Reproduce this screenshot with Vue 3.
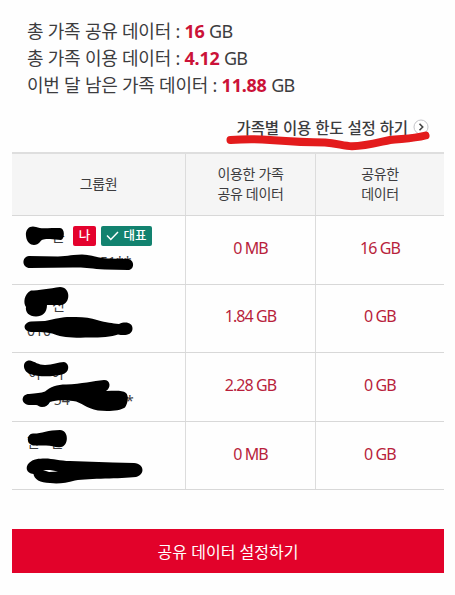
<script setup>
import { ref } from 'vue';

// 가족 데이터 요약
const summary = ref([
  { label: '총 가족 공유 데이터', value: '16' },
  { label: '총 가족 이용 데이터', value: '4.12' },
  { label: '이번 달 남은 가족 데이터', value: '11.88' },
]);

// 그룹원 목록 (이름과 번호는 펜으로 가림)
const members = ref([
  {
    id: 1,
    me: true,
    used: '0 MB',
    shared: '16 GB',
    viewBox: '12 216 173 68',
    texts: [
      { x: 52, y: 241, text: '은' },
      { x: 100, y: 267, text: '51**' },
    ],
    marks: [
      'M26 236C25 228 31 225 36 227C41 229 46 228 52 228L60 228C65 228 65 239 61 240L50 239C44 239 42 239 40 242C36 247 27 246 26 236Z',
      'M29 256L58 256.5C68 256 74 254.5 82 254.5C92 255 98 258 108 258.5L127 259C135 259 135 270 128 270L105 269.5C90 268.5 85 267 73 267.5L30 268C22 268 21 257 29 256Z',
    ],
  },
  {
    id: 2,
    used: '1.84 GB',
    shared: '0 GB',
    viewBox: '12 285 173 68',
    texts: [
      { x: 52, y: 310, text: '진' },
      { x: 27, y: 336, text: '010' },
    ],
    marks: [
      'M31 290.5C38 290.5 50 288.5 60 287C71 287 71 304 61 305L47 305C47 313 42 316.5 36 316.5C29 316.5 25 312 26 307C23 303 24 294 31 290.5Z',
      'M31 321.5L45 321C55 319 62 317 70 317C82 316.5 90 317.5 97 320C107 323 112 323 119 324C126 321 133 323 132.5 329C132 335 125 336 118 334.5C112 337 100 337.5 90 337.5C75 338 62 337.5 55 334.5C48 331.5 38 332.5 31 332C23 331 22 323 31 321.5Z',
    ],
  },
  {
    id: 3,
    used: '2.28 GB',
    shared: '0 GB',
    viewBox: '12 353 173 68',
    texts: [
      { x: 28, y: 378, text: '이' },
      { x: 51, y: 378, text: '이' },
      { x: 42, y: 405, text: '0 54' },
      { x: 126, y: 406, text: '*' },
    ],
    marks: [
      'M30 360.5C35 361.5 38 365 45 365C53 365 58 362 64 362C70 363 70 373 62 374.5C52 377 38 377 30 374C22 371 22 360 30 360.5Z',
      'M29 394C36 393 41 393 45 391.5C50 387 57 384.5 66 384.5C82 384 93 381 104 380C111 380 111 388 106 391C115 391 122 390 126 393C129 396 128 403 125 407.5C120 411 108 411.5 98 410.5C86 408.5 82 402 73 401C64 400 56 400 50 402C48 405 46 407 42 407C39 407 38 405 36 405L29 405C20 404 21 394 29 394Z',
    ],
  },
  {
    id: 4,
    used: '0 MB',
    shared: '0 GB',
    viewBox: '12 422 173 68',
    texts: [
      { x: 27, y: 447, text: '한' },
      { x: 51, y: 447, text: '은' },
    ],
    marks: [
      'M33 433.5C40 434 48 430 60 430C69 430 69 446 61 447C56 448 52 445.5 46 445.5L33 445.5C26 444 26 434 33 433.5Z',
      'M45 458.5C53 458.5 60 461 70 461L113 462.5L134 463C145 464 145 475 136 477C120 479 90 478 75 480.5C66 483 58 484 50 483C40 483 34 479 33.5 474C26 473 25 467 29 463C33 459 39 458.5 45 458.5ZM43 470L49 472L58 471.5L50 470Z',
    ],
  },
]);
</script>

<template>
  <main class="page">
    <ul class="summary">
      <li v-for="item in summary" :key="item.label">
        {{ item.label }} : <strong>{{ item.value }}</strong> <span class="unit">GB</span>
      </li>
    </ul>

    <div class="limit">
      <a class="limit-link">
        <span>가족별 이용 한도 설정 하기</span>
        <svg class="arrow" viewBox="0 0 16 16">
          <circle cx="8" cy="8" r="7" fill="#fff" stroke="#c4c4c8" />
          <path d="M6.5 4.8 9.7 8l-3.2 3.2" fill="none" stroke="#444" stroke-width="1.6" />
        </svg>
      </a>
      <svg class="underline" viewBox="220 125 220 30">
        <path d="M230.500 140C245 139 258 139 270 140C290 141.500 305 142.500 325 142.500C337 143.500 344 146 352 146.300C366 146 378 142.500 390 140C402 138.500 412 139 425.500 135.500" />
      </svg>
    </div>

    <div class="table">
      <div class="row head">
        <div class="cell"><span>그룹원</span></div>
        <div class="cell"><span>이용한 가족<br />공유 데이터</span></div>
        <div class="cell"><span>공유한<br />데이터</span></div>
      </div>
      <div v-for="m in members" :key="m.id" class="row">
        <div class="cell member">
          <div v-if="m.me" class="badges">
            <span class="badge me">나</span>
            <span class="badge rep">
              <svg class="check" viewBox="0 0 13 10"><path d="M1 4.500 4.800 8.500 12 1" /></svg>대표
            </span>
          </div>
          <svg class="marks" :viewBox="m.viewBox">
            <text v-for="t in m.texts" :key="t.x" :x="t.x" :y="t.y">{{ t.text }}</text>
            <path v-for="d in m.marks" :key="d" :d="d" fill-rule="evenodd" />
          </svg>
        </div>
        <div class="cell value"><span>{{ m.used }}</span></div>
        <div class="cell value"><span>{{ m.shared }}</span></div>
      </div>
    </div>

    <button class="submit">공유 데이터 설정하기</button>
  </main>
</template>

<style>
body {
  background: #fefefe;
}
</style>

<style scoped>
.page {
  box-sizing: border-box;
  width: 455px;
  height: 595px;
  padding: 18px 11px 0 12px;
  overflow: hidden;
  font-family: "Noto Sans", "Noto Sans CJK KR", sans-serif;
  color: #3c3c3e;
}
.summary {
  list-style: none;
  margin: 0;
  padding: 0 0 0 15px;
  font-size: 18px;
  line-height: 27px;
  letter-spacing: -0.23px;
  white-space: nowrap;
}
.summary strong {
  color: #cb1238;
}
.unit {
  letter-spacing: -0.8px;
}
.limit {
  position: relative;
  display: flex;
  justify-content: flex-end;
  height: 53px;
}
.limit-link {
  display: flex;
  align-items: center;
  gap: 5px;
  height: 24px;
  margin-top: 16px;
  margin-right: 15px;
  font-size: 15.5px;
  font-weight: 500;
  letter-spacing: -0.1px;
  white-space: nowrap;
}
.arrow {
  width: 16px;
  height: 16px;
}
.underline {
  position: absolute;
  left: 208px;
  top: 26px;
  width: 220px;
  height: 30px;
}
.underline path {
  fill: none;
  stroke: #e31b1c;
  stroke-width: 8;
  stroke-linecap: round;
}
.table {
  border-top: 2px solid #dedede;
}
.row {
  display: grid;
  grid-template-columns: 174px 130px 128px;
  height: 68.6px;
  box-sizing: border-box;
  border-bottom: 1px solid #d8d8d8;
}
.head {
  height: 62px;
  background: #f5f5f5;
  font-size: 14px;
  line-height: 20.5px;
  letter-spacing: -0.3px;
}
.cell {
  display: flex;
  align-items: center;
  justify-content: center;
  text-align: center;
  border-right: 1px solid #dcdcdc;
}
.head .cell {
  padding-bottom: 1px;
}
.cell:last-child {
  border-right: none;
}
.value {
  padding-bottom: 4px;
  color: #b81f3c;
  font-size: 16px;
  letter-spacing: -0.9px;
}
.member {
  position: relative;
  align-items: flex-start;
  justify-content: flex-start;
}
.badges {
  display: flex;
  gap: 5px;
  padding: 10px 0 0 61px;
}
.badge {
  display: flex;
  align-items: center;
  justify-content: center;
  height: 20px;
  border-radius: 2px;
  color: #fff;
  font-size: 12.5px;
  font-weight: 500;
  line-height: 20px;
}
.me {
  width: 23px;
  background: #e4022d;
}
.rep {
  width: 51px;
  gap: 4px;
  background: #12826f;
}
.check {
  width: 13px;
  height: 10px;
}
.check path {
  fill: none;
  stroke: #fff;
  stroke-width: 1.5;
}
.marks {
  position: absolute;
  left: 0;
  top: 0;
  width: 173px;
  height: 68px;
}
.marks text {
  font-size: 14px;
  fill: #3c3c3e;
}
.marks path {
  fill: #000;
}
.submit {
  display: block;
  width: 432px;
  height: 44px;
  margin-top: 39px;
  padding: 0;
  border: none;
  background: #e2022a;
  color: #fff;
  font-family: inherit;
  font-size: 16px;
}
</style>
